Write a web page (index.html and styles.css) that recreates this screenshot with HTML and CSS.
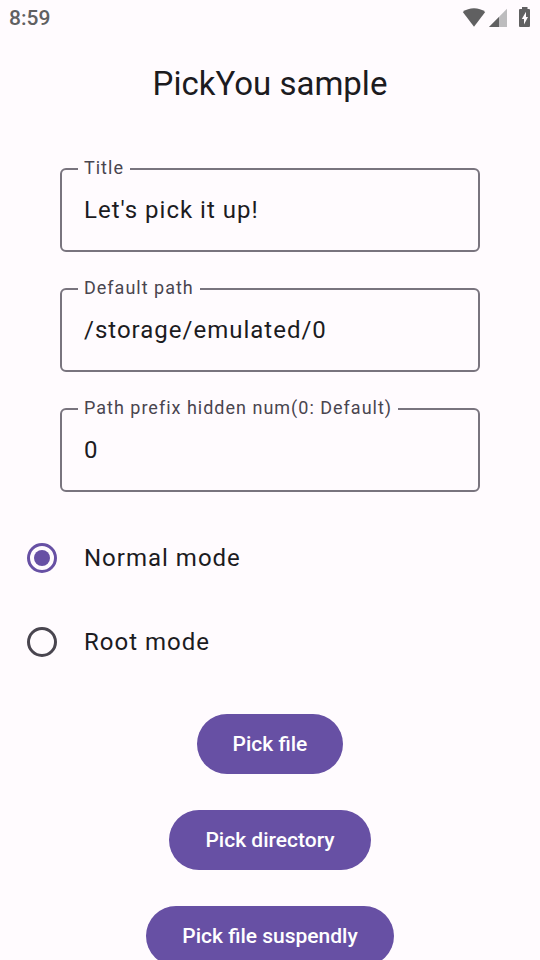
FILE: index.html
```html
<!DOCTYPE html>
<html lang="en">
<head>
<meta charset="utf-8">
<meta name="viewport" content="width=device-width, initial-scale=1">
<title>PickYou sample</title>
<link rel="stylesheet" href="styles.css">
</head>
<body>
<div class="screen">
  <div class="status">
    <span class="clock">8:59</span>
    <svg class="status-icons" width="70" height="20" viewBox="0 0 70 20" aria-hidden="true">
      <path fill="#606061" d="M1.800 4C8-1 18-1 24.200 4L13 18.800Z"/>
      <path fill="#bdbcbe" d="M46 0.800V19H28Z"/>
      <path fill="#606061" d="M38 9V19H28Z"/>
      <path fill="#606061" d="M61-1H66.500V1H68Q69 1 69 2V18Q69 19 68 19H59Q58 19 58 18V2Q58 1 59 1H61Z"/>
      <path fill="#fffbfe" d="M65 3.800L60.800 11H63V16.500L67 9H65Z"/>
    </svg>
  </div>
  <h1 class="title">PickYou sample</h1>
  <form class="content">
    <div class="fields">
      <div class="field">
        <label class="field-label" for="title">Title</label>
        <input class="field-input" id="title" type="text" value="Let's pick it up!">
      </div>
      <div class="field">
        <label class="field-label" for="path">Default path</label>
        <input class="field-input" id="path" type="text" value="/storage/emulated/0">
      </div>
      <div class="field">
        <label class="field-label" for="hidden-num">Path prefix hidden num(0: Default)</label>
        <input class="field-input" id="hidden-num" type="text" value="0">
      </div>
    </div>
    <div class="modes">
      <label class="mode"><input class="radio" type="radio" name="mode" checked>Normal mode</label>
      <label class="mode"><input class="radio" type="radio" name="mode">Root mode</label>
    </div>
    <div class="actions">
      <button class="button" type="button">Pick file</button>
      <button class="button" type="button">Pick directory</button>
      <button class="button" type="button">Pick file suspendly</button>
    </div>
  </form>
</div>
</body>
</html>
```
FILE: styles.css
```css
* {
  box-sizing: border-box;
}

body {
  margin: 0;
  background: #fffbfe;
  color: #1c1b1f;
  font-family: Roboto, "Liberation Sans", sans-serif;
}

.screen {
  height: 100vh;
  overflow: hidden auto;
  scrollbar-width: none;
}

.status {
  display: flex;
  justify-content: space-between;
  align-items: center;
  height: 36px;
  padding: 0 9px;
}

.clock {
  color: #606061;
  font-size: 21px;
  font-weight: 500;
  line-height: 38px;
}

.status-icons {
  overflow: visible;
}

.title {
  margin: 0;
  font-size: 33px;
  font-weight: 400;
  line-height: 96px;
  text-align: center;
}

.fields {
  display: flex;
  flex-direction: column;
  gap: 36px;
  max-width: 420px;
  margin: 36px auto 0;
}

.field {
  position: relative;
}

.field-label {
  position: absolute;
  top: -12px;
  left: 18px;
  padding: 0 6px;
  background: #fffbfe;
  color: #49454f;
  font-size: 18px;
  letter-spacing: 1px;
  line-height: 24px;
}

.field-input {
  display: block;
  width: 100%;
  height: 84px;
  padding: 0 22px;
  border: 2px solid #79747e;
  border-radius: 6px;
  outline: 0;
  background: transparent;
  color: inherit;
  font: inherit;
  font-size: 24px;
  letter-spacing: 1px;
}

.modes {
  padding-top: 24px;
}

.mode {
  display: flex;
  align-items: center;
  gap: 27px;
  height: 84px;
  padding: 0 27px;
  font-size: 24px;
  letter-spacing: 1px;
}

.radio {
  appearance: none;
  display: grid;
  place-items: center;
  width: 30px;
  height: 30px;
  margin: 0;
  border: 3px solid #49454f;
  border-radius: 50%;
}

.radio:checked {
  border-color: #6750a4;
}

.radio:checked::before {
  content: "";
  width: 16px;
  height: 16px;
  border-radius: 50%;
  background: #6750a4;
}

.actions {
  display: flex;
  flex-direction: column;
  align-items: center;
  gap: 36px;
  padding: 30px 0 36px;
}

.button {
  height: 60px;
  padding: 0 36px;
  border: 0;
  border-radius: 30px;
  background: #6750a4;
  color: #fff;
  font: inherit;
  font-size: 21px;
  font-weight: 500;
}
```
